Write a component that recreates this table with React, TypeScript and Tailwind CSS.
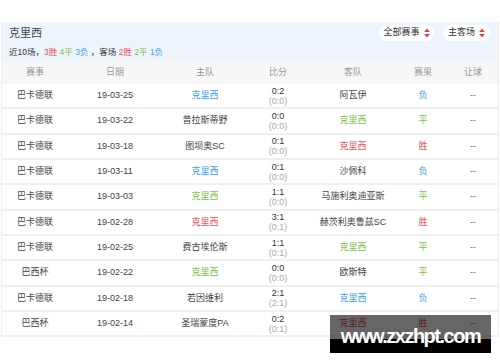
import React from 'react';

type Res = 'win' | 'draw' | 'loss';

interface Match {
  league: string;
  date: string;
  home: string;
  score: string;
  half: string;
  away: string;
  result: Res;
  crisHome: boolean;
}

const matches: Match[] = [
  { league: '巴卡德联', date: '19-03-25', home: '克里西', score: '0:2', half: '(0:0)', away: '阿瓦伊', result: 'loss', crisHome: true },
  { league: '巴卡德联', date: '19-03-22', home: '普拉斯蒂野', score: '0:0', half: '(0:0)', away: '克里西', result: 'draw', crisHome: false },
  { league: '巴卡德联', date: '19-03-18', home: '图坝奥SC', score: '0:1', half: '(0:0)', away: '克里西', result: 'win', crisHome: false },
  { league: '巴卡德联', date: '19-03-11', home: '克里西', score: '0:1', half: '(0:0)', away: '沙佩科', result: 'loss', crisHome: true },
  { league: '巴卡德联', date: '19-03-03', home: '克里西', score: '1:1', half: '(0:0)', away: '马施利奥迪亚斯', result: 'draw', crisHome: true },
  { league: '巴卡德联', date: '19-02-28', home: '克里西', score: '3:1', half: '(0:1)', away: '赫茨利奥鲁兹SC', result: 'win', crisHome: true },
  { league: '巴卡德联', date: '19-02-25', home: '费古埃伦斯', score: '1:1', half: '(0:1)', away: '克里西', result: 'draw', crisHome: false },
  { league: '巴西杯', date: '19-02-22', home: '克里西', score: '0:0', half: '(0:0)', away: '欧斯特', result: 'draw', crisHome: true },
  { league: '巴卡德联', date: '19-02-18', home: '若因维利', score: '2:1', half: '(2:1)', away: '克里西', result: 'loss', crisHome: false },
  { league: '巴西杯', date: '19-02-14', home: '圣瑞蒙度PA', score: '0:2', half: '(0:1)', away: '克里西', result: 'win', crisHome: false },
];

const resColor: Record<Res, string> = {
  win: 'text-[#ef4f57]',
  draw: 'text-[#7cc24a]',
  loss: 'text-[#3a9ef4]',
};

const resLabel: Record<Res, string> = { win: '胜', draw: '平', loss: '负' };

const cols = 'grid grid-cols-[66px_94px_86px_60px_90px_50px_50px]';

const SortIcon = () => (
  <svg width="6" height="10" viewBox="0 0 6 10" className="ml-[4px]">
    <path d="M3 0.5 L5.8 4 L0.2 4 Z" fill="#e8383f" />
    <path d="M3 9.5 L5.8 6 L0.2 6 Z" fill="#e8383f" />
  </svg>
);

const App: React.FC = () => {
  return (
    <div
      className="relative w-[500px] h-[362px] bg-white overflow-hidden"
      style={{ fontFamily: '"Liberation Sans", "Noto Sans CJK SC", sans-serif' }}
    >
      <div className="mt-[22px] mx-[1px] bg-[#f0f0f0] px-[1px] pb-[2px]">
        {/* Header */}
        <div className="bg-[#eef5fc] h-[39px] flex items-start justify-between pl-[7px] pr-[8px]">
          <div>
            <div className="text-[11px] text-[#444] leading-none mt-[6px]">克里西</div>
            <div className="text-[8.5px] text-[#333] leading-none mt-[9px] whitespace-pre">
              近10场，<span className={resColor.win}>3胜</span> <span className={resColor.draw}>4平</span>{' '}
              <span className={resColor.loss}>3负</span> ，客场 <span className={resColor.win}>2胜</span>{' '}
              <span className={resColor.draw}>2平</span> <span className={resColor.loss}>1负</span>
            </div>
          </div>
          <div className="flex items-center gap-[9px] mt-[3px]">
            <button className="h-[16px] w-[55px] rounded-full bg-white flex items-center justify-center text-[9px] text-[#333]">
              全部赛事
              <SortIcon />
            </button>
            <button className="h-[16px] w-[47px] rounded-full bg-white flex items-center justify-center text-[9px] text-[#333]">
              主客场
              <SortIcon />
            </button>
          </div>
        </div>

        {/* Table head */}
        <div className={`${cols} h-[23px] bg-[#f7f7f7] items-center text-[9px] text-[#999] text-center`}>
          <div>赛事</div>
          <div>日期</div>
          <div>主队</div>
          <div>比分</div>
          <div>客队</div>
          <div>赛果</div>
          <div>让球</div>
        </div>

        {/* Rows */}
        <div className="flex flex-col gap-[2px]">
          {matches.map((m, i) => (
            <div
              key={i}
              className={`${cols} h-[23.33px] bg-white items-center text-[9px] text-[#444] text-center`}
            >
              <div>{m.league}</div>
              <div>{m.date}</div>
              <div className={m.crisHome ? resColor[m.result] : ''}>{m.home}</div>
              <div className="flex flex-col leading-[10px]">
                <span className="text-[#333]">{m.score}</span>
                <span className="text-[#aaa]">{m.half}</span>
              </div>
              <div className={!m.crisHome ? resColor[m.result] : ''}>{m.away}</div>
              <div className={resColor[m.result]}>{resLabel[m.result]}</div>
              <div className="text-[#666]">--</div>
            </div>
          ))}
        </div>
      </div>

      {/* Watermark */}
      <div className="absolute left-[330px] top-[315px] w-[161px] h-[38px] flex flex-col">
        <div className="h-[24px] bg-black/60" />
        <div className="h-[14px] bg-black" />
        <div className="absolute inset-0 flex items-center justify-center pt-[3px] text-white font-bold text-[20px] tracking-[-1.5px]">
          www.zxzhpt.com
        </div>
      </div>
    </div>
  );
};

export default App;
